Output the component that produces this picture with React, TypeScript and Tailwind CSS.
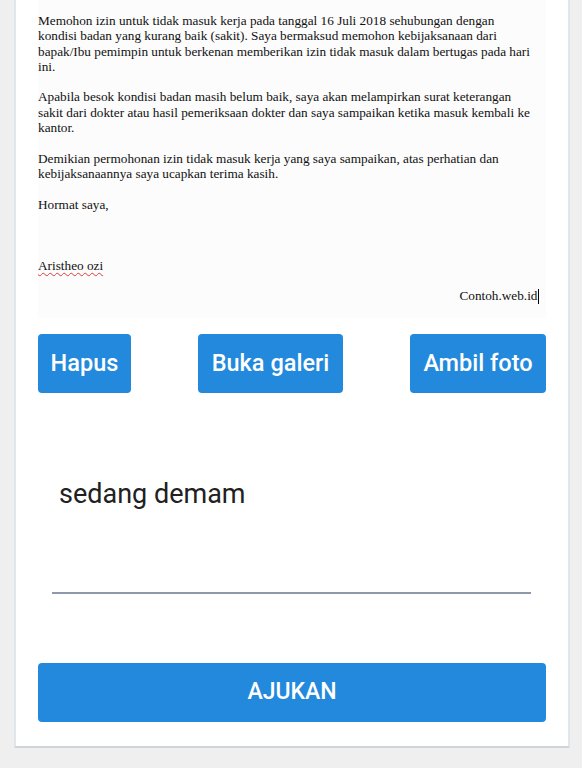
import React from "react"

const paragraphs: string[][] = [
    [
        "Memohon izin untuk tidak masuk kerja pada tanggal 16 Juli 2018 sehubungan dengan",
        "kondisi badan yang kurang baik (sakit). Saya bermaksud memohon kebijaksanaan dari",
        "bapak/Ibu pemimpin untuk berkenan memberikan izin tidak masuk dalam bertugas pada hari",
        "ini.",
    ],
    [
        "Apabila besok kondisi badan masih belum baik, saya akan melampirkan surat keterangan",
        "sakit dari dokter atau hasil pemeriksaan dokter dan saya sampaikan ketika masuk kembali ke",
        "kantor.",
    ],
    [
        "Demikian permohonan izin tidak masuk kerja yang saya sampaikan, atas perhatian dan",
        "kebijaksanaannya saya ucapkan terima kasih.",
    ],
]

function LetterImage() {
    return (
        <div className="h-[318px] bg-[#fcfcfc] pt-[13px] pr-[7px] text-[13.25px] leading-[15.3px] text-[#111] font-['Liberation_Serif','Times_New_Roman',serif]">
            {paragraphs.map((lines, i) => (
                <div key={i} className="mb-[15.3px]">
                    {lines.map((line) => (
                        <div key={line} className="whitespace-nowrap">
                            {line}
                        </div>
                    ))}
                </div>
            ))}
            <div>Hormat saya,</div>

            {/* signature gap */}
            <div className="mt-[45.9px]">
                <span className="underline decoration-wavy decoration-[#e03a3a] decoration-1 underline-offset-[2px]">
                    Aristheo ozi
                </span>
            </div>
            <div className="mt-[15.3px] flex justify-end">
                <span>Contoh.web.id</span>
                <span className="inline-block w-[1.5px] h-[15px] bg-black mt-[1px]"></span>
            </div>
        </div>
    )
}

export default function App() {
    return (
        <div className="min-h-screen w-full bg-[#efefef] pl-[14px] pb-[20px] font-['Roboto','Noto_Sans',sans-serif]">
            <div className="w-[556px] bg-white border-x-2 border-b-2 border-x-[#e1e6eb] border-b-[#cfd4d9] px-[22px] pb-[24px]">
                <LetterImage />

                {/* actions */}
                <div className="mt-[16px] flex justify-between font-['Roboto_Medium','Roboto',sans-serif]">
                    <button className="h-[59px] w-[93px] rounded-[4px] bg-[#2289dc] text-white text-[23.5px]">
                        Hapus
                    </button>
                    <button className="h-[59px] w-[145px] rounded-[4px] bg-[#2289dc] text-white text-[23.5px]">
                        Buka galeri
                    </button>
                    <button className="h-[59px] w-[136px] rounded-[4px] bg-[#2289dc] text-white text-[23.5px]">
                        Ambil foto
                    </button>
                </div>

                {/* reason input */}
                <div className="mt-[85px] ml-[14px] mr-[15px] border-b-2 border-[#8e9aab] pb-[82px]">
                    <div className="pl-[7px] text-[27px] leading-[32px] text-[#212121]">sedang demam</div>
                </div>

                <button className="mt-[69px] h-[59px] w-full rounded-[4px] bg-[#2289dc] text-white text-[23px] font-['Roboto_Medium','Roboto',sans-serif]">
                    AJUKAN
                </button>
            </div>
        </div>
    )
}
